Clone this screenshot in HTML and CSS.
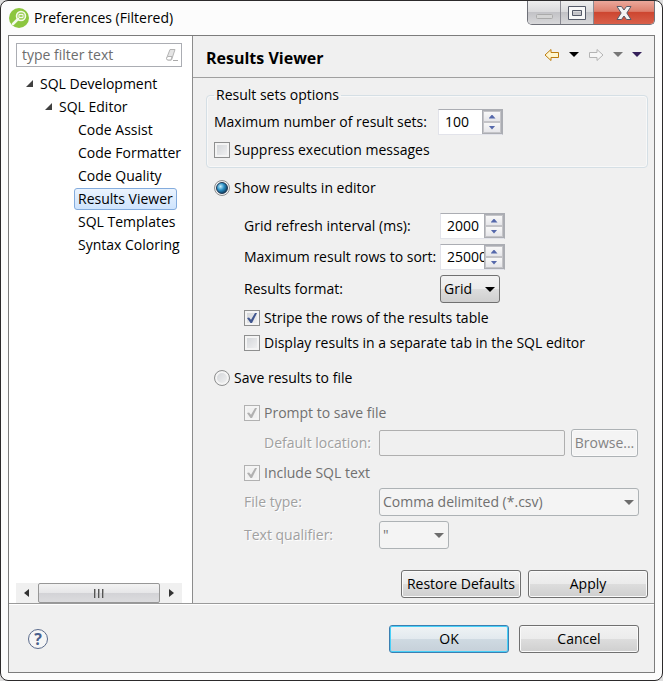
FILE: index.html
```html
<!DOCTYPE html>
<html lang="en">
<head>
    <meta charset="UTF-8">
    <meta name="viewport" content="width=device-width, initial-scale=1.0">
    <title>Preferences (Filtered)</title>
    <link rel="stylesheet" href="styles.css">
</head>
<body>

    <div class="window">
        <header class="titlebar">
            <svg class="app-icon" width="20" height="20" viewBox="0 0 20 20">
                <circle cx="10" cy="10" r="10" fill="#8cc63f"/>
                <circle cx="12" cy="8" r="4.500" fill="#a5d165" stroke="#f4faec" stroke-width="1.500"/>
                <path d="M9 11L4 16" stroke="#f4faec" stroke-width="2.500" stroke-linecap="round"/>
                <path d="M10 6.500h4v3h-4z" fill="none" stroke="#f4faec"/>
            </svg>
            <h1>Preferences (Filtered)</h1>
            <div class="window-buttons">
                <button class="win-btn minimize" aria-label="Minimize">
                    <svg width="18" height="16" viewBox="0 0 18 16"><rect x="1.500" y="9.500" width="16" height="4" rx="1" fill="#d4d4d4" stroke="#aaa"/></svg>
                </button>
                <button class="win-btn maximize" aria-label="Maximize">
                    <svg width="18" height="16" viewBox="0 0 18 16"><path d="M.5 1.500h17v13H.5zM4.500 5.500h9v5h-9z" fill="#f8f8f8" fill-rule="evenodd" stroke="#555a68"/></svg>
                </button>
                <button class="win-btn close" aria-label="Close">
                    <svg width="18" height="16" viewBox="0 0 18 16"><path d="M2 1.500h4.500L9 5l2.500-3.500H16L11.800 8l4.200 6.500h-4.500L9 11l-2.500 3.500H2L6.200 8z" fill="#f4f4f4" stroke="#555a68" stroke-linejoin="round"/></svg>
                </button>
            </div>
        </header>

        <div class="client">
            <div class="main">
                <aside class="sidebar">
                    <div class="filter">
                        <input type="text" placeholder="type filter text" aria-label="Filter">
                        <svg width="14" height="14" viewBox="0 0 14 14">
                            <path d="M5 1.500h5L6.500 12H2.500L1.500 10.500z" fill="#e4e4e4" stroke="#b4b4b4"/>
                            <path d="M2.500 8.500H7L6 12H2.500L1.500 10.500z" fill="#fff" stroke="#b4b4b4"/>
                            <path d="M8 12.500h5" stroke="#aaa"/>
                        </svg>
                    </div>
                    <ul class="tree">
                        <li class="level-1"><span class="twisty"></span><span class="item">SQL Development</span></li>
                        <li class="level-2"><span class="twisty"></span><span class="item">SQL Editor</span></li>
                        <li class="level-3"><span class="item">Code Assist</span></li>
                        <li class="level-3"><span class="item">Code Formatter</span></li>
                        <li class="level-3"><span class="item">Code Quality</span></li>
                        <li class="level-3"><span class="item selected">Results Viewer</span></li>
                        <li class="level-3"><span class="item">SQL Templates</span></li>
                        <li class="level-3"><span class="item">Syntax Coloring</span></li>
                    </ul>
                    <div class="scrollbar">
                        <button class="scroll-arrow" aria-label="Scroll left"><svg width="6" height="8" viewBox="0 0 6 8"><path d="M5 0v8L0 4z" fill="#333"/></svg></button>
                        <div class="thumb"><i></i><i></i><i></i></div>
                        <button class="scroll-arrow" aria-label="Scroll right"><svg width="6" height="8" viewBox="0 0 6 8"><path d="M1 0v8l5-4z" fill="#333"/></svg></button>
                    </div>
                </aside>

                <section class="page">
                    <div class="page-header">
                        <h2>Results Viewer</h2>
                        <div class="nav">
                            <button aria-label="Back"><svg width="16" height="14" viewBox="0 0 16 14"><path d="M1 7l6-5.500V4.500h7.500v5H7v3z" fill="#fff6cf" stroke="#bd7d10" stroke-linejoin="round"/></svg></button>
                            <button aria-label="Back history"><svg width="10" height="5" viewBox="0 0 10 5"><path d="M0 0h10L5 5z" fill="#000"/></svg></button>
                            <button aria-label="Forward"><svg width="16" height="14" viewBox="0 0 16 14"><path d="M15 7L9 1.500V4.500H1.500v5H9v3z" fill="#f6f6f6" stroke="#b4b4b4" stroke-linejoin="round"/></svg></button>
                            <button aria-label="Forward history"><svg width="10" height="5" viewBox="0 0 10 5"><path d="M0 0h10L5 5z" fill="#777"/></svg></button>
                            <button aria-label="Menu"><svg width="10" height="5" viewBox="0 0 10 5"><path d="M0 0h10L5 5z" fill="#35205a"/></svg></button>
                        </div>
                    </div>

                    <form class="options">
                        <fieldset>
                            <legend>Result sets options</legend>
                            <div class="set-row">
                                <label for="maxSets">Maximum number of result sets:</label>
                                <div class="spinner">
                                    <input type="text" id="maxSets" value="100">
                                    <div class="steps"><button type="button" class="up" aria-label="Increase"></button><button type="button" class="down" aria-label="Decrease"></button></div>
                                </div>
                            </div>
                            <label class="check"><input type="checkbox">Suppress execution messages</label>
                        </fieldset>

                        <label class="check mode"><input type="radio" name="mode" checked>Show results in editor</label>
                        <div class="editor-options">
                            <label for="refresh">Grid refresh interval (ms):</label>
                            <div class="spinner">
                                <input type="text" id="refresh" value="2000">
                                <div class="steps"><button type="button" class="up" aria-label="Increase"></button><button type="button" class="down" aria-label="Decrease"></button></div>
                            </div>
                            <label for="maxRows">Maximum result rows to sort:</label>
                            <div class="spinner">
                                <input type="text" id="maxRows" value="25000">
                                <div class="steps"><button type="button" class="up" aria-label="Increase"></button><button type="button" class="down" aria-label="Decrease"></button></div>
                            </div>
                            <label for="format">Results format:</label>
                            <div class="combo format"><select id="format"><option>Grid</option></select></div>
                            <label class="check wide"><input type="checkbox" checked>Stripe the rows of the results table</label>
                            <label class="check wide"><input type="checkbox">Display results in a separate tab in the SQL editor</label>
                        </div>

                        <label class="check mode second"><input type="radio" name="mode">Save results to file</label>
                        <div class="file-options">
                            <label class="check wide off"><input type="checkbox" checked disabled>Prompt to save file</label>
                            <label for="location" class="faded indent">Default location:</label>
                            <div class="location">
                                <input type="text" id="location" disabled>
                                <button type="button" class="btn browse" disabled>Browse...</button>
                            </div>
                            <label class="check wide off"><input type="checkbox" checked disabled>Include SQL text</label>
                            <label for="fileType" class="faded">File type:</label>
                            <div class="combo off"><select id="fileType" disabled><option>Comma delimited (*.csv)</option></select></div>
                            <label for="qualifier" class="faded">Text qualifier:</label>
                            <div class="combo qualifier off"><select id="qualifier" disabled><option>"</option></select></div>
                        </div>

                        <div class="page-buttons">
                            <button type="button" class="btn">Restore Defaults</button>
                            <button type="button" class="btn">Apply</button>
                        </div>
                    </form>
                </section>
            </div>

            <footer class="footer">
                <button class="help" aria-label="Help">?</button>
                <div class="footer-buttons">
                    <button class="btn default">OK</button>
                    <button class="btn">Cancel</button>
                </div>
            </footer>
        </div>
    </div>

</body>
</html>
```
FILE: styles.css
```css
* {
    box-sizing: border-box;
}

body {
    margin: 0;
    background-color: #ddd;
    color: #000;
    font-family: "Open Sans", "Noto Sans", sans-serif;
    font-size: 14px;
    line-height: 20px;
}

button, input, select {
    margin: 0;
    font: inherit;
    color: inherit;
}

h1, h2, ul {
    margin: 0;
    padding: 0;
}

svg {
    display: block;
}

.window {
    display: flex;
    flex-direction: column;
    min-height: 100vh;
    padding: 0 7px 7px;
    background-color: #fcfcfc;
    border: 1px solid #2c2a2b;
    border-radius: 8px;
}

/* Title bar */
.titlebar {
    display: flex;
    align-items: center;
    height: 34px;
}

.app-icon {
    margin: 0 5px 0 1px;
}

.titlebar h1 {
    flex: 1;
    font-size: 14px;
    font-weight: normal;
}

.window-buttons {
    display: flex;
    align-self: flex-start;
    height: 24px;
    border: 1px solid #6e7078;
    border-top: 0;
    border-radius: 0 0 5px 5px;
    overflow: hidden;
}

.win-btn {
    display: flex;
    align-items: center;
    justify-content: center;
    width: 33px;
    padding: 0;
    border: 0;
    border-right: 1px solid #8a8a92;
    background: linear-gradient(#eee, #d8d8da 50%, #c2c2c6 50%, #d8d8da);
}

.win-btn.close {
    width: 60px;
    border-right: 0;
    background: linear-gradient(#eba89b, #dd7f6d 45%, #cd4630 50%, #d9604a);
}

/* Client area */
.client {
    display: flex;
    flex: 1;
    flex-direction: column;
    background-color: #f0f0f0;
    border: 1px solid #7c7c7c;
}

.main {
    display: flex;
    flex: 1;
    border-bottom: 1px solid #9a9a9a;
}

/* Tree */
.sidebar {
    display: flex;
    flex-direction: column;
    width: 184px;
    flex-shrink: 0;
    padding: 7px 10px 0 7px;
    background-color: #fff;
    border-right: 1px solid #8c8c8c;
}

.filter {
    display: flex;
    align-items: center;
    height: 24px;
    padding: 0 2px 0 5px;
    border: 1px solid #abadb3;
}

.filter input {
    flex: 1;
    min-width: 0;
    padding: 0;
    border: 0;
    outline: 0;
}

.filter input::placeholder {
    color: #6d6d6d;
}

.tree {
    flex: 1;
    margin-top: 5px;
    list-style: none;
    white-space: nowrap;
    overflow: hidden;
}

.tree li {
    display: flex;
    align-items: center;
    height: 23px;
}

.level-1 {
    padding-left: 10px;
}

.level-2 {
    padding-left: 29px;
}

.level-3 {
    padding-left: 58px;
}

.twisty {
    width: 7px;
    height: 7px;
    margin-right: 3px;
    background-color: #404040;
    clip-path: polygon(100% 0, 100% 100%, 0 100%);
}

.item {
    padding: 0 3px;
    border: 1px solid transparent;
    border-radius: 3px;
}

.item.selected {
    background: linear-gradient(#eaf3fe, #cfe4fd);
    border-color: #84acdd;
}

.scrollbar {
    display: flex;
    height: 20px;
    background-color: #f0f0f0;
}

.scroll-arrow {
    display: flex;
    align-items: center;
    justify-content: center;
    width: 22px;
    padding: 0;
    border: 0;
    background: none;
}

.thumb {
    display: flex;
    flex: 1;
    align-items: center;
    justify-content: center;
    gap: 2px;
    background: linear-gradient(#f3f3f3, #e6e6e8 50%, #d2d2d6 50%, #dcdcde);
    border: 1px solid #979797;
    border-radius: 2px;
}

.thumb i {
    width: 2px;
    height: 9px;
    background: linear-gradient(90deg, #555 50%, #aaa 50%);
}

/* Preference page */
.page {
    display: flex;
    flex: 1;
    flex-direction: column;
    min-width: 0;
}

.page-header {
    display: flex;
    align-items: center;
    justify-content: space-between;
    height: 42px;
    padding: 2px 12px 0 13px;
    border-bottom: 1px solid #a0a0a0;
}

.page-header h2 {
    font-size: 16px;
    font-weight: bold;
}

.nav {
    display: flex;
    align-items: center;
    gap: 9px;
    height: 20px;
    margin-bottom: 6px;
}

.nav button {
    padding: 0;
    border: 0;
    background: none;
}

.options {
    display: flex;
    flex: 1;
    flex-direction: column;
    padding: 7px 6px 5px 13px;
}

fieldset {
    min-width: 0;
    margin: 0;
    padding: 4px 7px 7px;
    border: 1px solid #d5dfe5;
    border-radius: 4px;
    box-shadow: inset 0 0 0 1px #f8f8f8;
}

legend {
    padding: 0 2px;
}

.set-row {
    display: flex;
    align-items: center;
    justify-content: space-between;
    width: 289px;
    margin-bottom: 5px;
}

.spinner {
    display: flex;
    width: 65px;
    height: 26px;
    background-color: #fff;
    border: 1px solid #abadb3;
    border-left-color: #e2e3ea;
    border-bottom-color: #e2e3ea;
}

.spinner input {
    width: 43px;
    padding: 0 0 0 6px;
    border: 0;
    outline: 0;
    background: none;
}

.steps {
    display: flex;
    flex: 1;
    flex-direction: column;
    border: 1px solid #abadb3;
    background-color: #f0f0f0;
}

.steps button {
    display: flex;
    flex: 1;
    align-items: center;
    justify-content: center;
    padding: 0;
    border: 1px solid #c4c4c8;
    background: linear-gradient(#f8f8f8, #e6e6ea);
}

.steps button::after {
    content: "";
    width: 7px;
    height: 4px;
    background-color: #5568ab;
    clip-path: polygon(50% 0, 100% 100%, 0 100%);
}

.steps .down::after {
    clip-path: polygon(0 0, 100% 0, 50% 100%);
}

.check {
    display: flex;
    align-items: center;
    gap: 4px;
    height: 20px;
    white-space: nowrap;
}

.check input {
    display: flex;
    align-items: center;
    justify-content: center;
    width: 16px;
    height: 16px;
    appearance: none;
    border: 1px solid #8e8f8f;
    background: linear-gradient(135deg, #cfd2d6, #f4f4f4);
    box-shadow: inset 0 0 0 2px #f4f4f4;
}

.check input[type="checkbox"]:checked::after {
    content: "";
    width: 10px;
    height: 10px;
    background-color: #40568f;
    clip-path: polygon(0 50%, 20% 45%, 40% 68%, 80% 0, 100% 0, 50% 100%, 35% 100%);
}

.check input[type="radio"] {
    border-radius: 50%;
}

.check input[type="radio"]:checked::after {
    content: "";
    width: 10px;
    height: 10px;
    border: 1px solid #1c3550;
    border-radius: 50%;
    background: radial-gradient(circle at 35% 35%, #c4effc, #2a8fc4 40%, #0d3a5c 80%);
}

.mode {
    margin: 10px 0 15px 8px;
}

.mode.second {
    margin-top: 15px;
}

.off {
    color: #707070;
}

.check.off input {
    border-color: #b1b1b1;
    background: #f0f0f0;
}

.check.off input::after {
    background-color: #b0b0b0 !important;
}

.faded {
    color: #a0a0a0;
    text-shadow: 1px 1px 0 #fff;
}

.indent {
    padding-left: 20px;
}

.editor-options, .file-options {
    display: grid;
    align-items: center;
    gap: 5px;
    margin-left: 38px;
    white-space: nowrap;
}

.editor-options {
    grid-template-columns: 191px 1fr;
}

.file-options {
    grid-template-columns: 130px 1fr;
    margin-right: 9px;
}

.wide {
    grid-column: 1 / -1;
}

.combo {
    position: relative;
    height: 28px;
}

.combo::after {
    content: "";
    position: absolute;
    top: 12px;
    right: 5px;
    width: 10px;
    height: 5px;
    background-color: #000;
    clip-path: polygon(0 0, 100% 0, 50% 100%);
    pointer-events: none;
}

.combo select {
    width: 100%;
    height: 28px;
    padding: 0 3px;
    appearance: none;
    border: 1px solid #707070;
    border-radius: 3px;
    background: linear-gradient(#f2f2f2, #ebebeb 50%, #ddd 50%, #cfcfcf);
}

.combo.format {
    width: 60px;
}

.combo.qualifier {
    width: 70px;
}

.combo.off::after {
    background-color: #6d6d6d;
}

.combo.off select {
    opacity: 1;
    border-color: #adb2b5;
    background: #f4f4f4;
}

.location {
    display: flex;
    align-items: center;
    gap: 6px;
    height: 30px;
    padding-right: 1px;
}

.location input {
    flex: 1;
    min-width: 0;
    height: 26px;
    border: 1px solid #afafaf;
    border-radius: 2px;
    background-color: #f0f0f0;
}

/* Buttons */
.btn {
    width: 120px;
    height: 28px;
    padding: 0;
    border: 1px solid #707070;
    border-radius: 3px;
    background: linear-gradient(#f2f2f2, #ebebeb 50%, #ddd 50%, #cfcfcf);
    box-shadow: inset 0 0 0 1px #fafafa;
    white-space: nowrap;
}

.btn.browse {
    width: 67px;
    color: #838383;
    border-color: #adb2b5;
    background: #f4f4f4;
}

.btn.default {
    border-color: #3c7fb1;
    background: linear-gradient(#eff3f5, #e2e9ee 50%, #cfdae2 50%, #c6d0d9);
    box-shadow: inset 0 0 0 1px #48d0f8;
}

.page-buttons {
    display: flex;
    justify-content: flex-end;
    gap: 7px;
    margin-top: auto;
}

.footer {
    display: flex;
    align-items: center;
    justify-content: space-between;
    height: 68px;
    padding: 0 15px 0 19px;
    border-top: 1px solid #fff;
}

.help {
    width: 20px;
    height: 20px;
    padding: 0;
    border: 1px solid #5a6b8c;
    border-radius: 50%;
    background: #f6f6f6;
    color: #4a5f8c;
    font-size: 16px;
    font-weight: bold;
    line-height: 18px;
}

.footer-buttons {
    display: flex;
    gap: 10px;
}
```
